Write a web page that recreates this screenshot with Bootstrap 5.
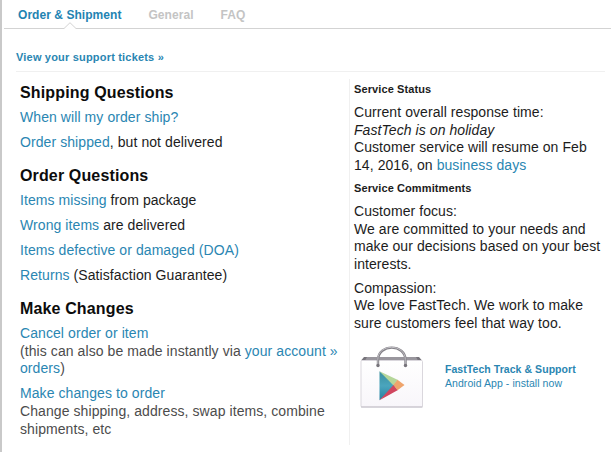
<!DOCTYPE html>
<html lang="en">
<head>
<meta charset="utf-8">
<title>Support</title>
<link href="https://cdn.jsdelivr.net/npm/bootstrap@5.3.0/dist/css/bootstrap.min.css" rel="stylesheet">
<style>
html,body{height:452px;overflow:hidden}
body{font-family:"Liberation Sans",Arial,sans-serif;font-size:14px;line-height:17.7px;letter-spacing:.05px;color:#1c1c1c;background:#fff}
.panel{height:452px;border-left:2px solid #c9c9c9}
a{color:#2a86b2;text-decoration:none}
.tabs{height:29px;border-bottom:1px solid #d3d3d3;margin-left:2px;padding:6px 0 0 14px;font-size:12px;line-height:18px;font-weight:bold;gap:27px}
.tabs a{color:#c4c4c4}
.tabs a.current{color:#2383b2}
.notch{left:46px;top:16px;width:12px;height:7px}
.tickets{height:43px;margin:0 6px 0 14px;padding-top:19px;border-bottom:1px solid #f0f0f0;font-size:11px;line-height:18px;letter-spacing:.19px}
.questions{width:347px;padding:11px 0 0 18px}
.questions h2{font-size:16px;line-height:19px;font-weight:bold;color:#0c0c0c;margin:0 0 7.4px;letter-spacing:.14px}
.questions p{margin:0 0 7px;letter-spacing:.08px}
.questions p.group-end{margin-bottom:14.3px}
.muted{color:#4c4c4c}
.status{width:256px;height:366px;margin-top:7px;padding:2px 0 0 4px;border-left:1px solid #f0f0f0}
.status h3{font-size:11px;line-height:16px;font-weight:bold;margin:0 0 7px;letter-spacing:.1px}
.status p{margin:0 0 6px;letter-spacing:.07px}
.status p.overall{margin-bottom:5px}
.app{font-size:10.5px;line-height:14px;letter-spacing:.06px;gap:21px;padding:5px 0 0 6px}
</style>
<script src="https://cdn.jsdelivr.net/npm/bootstrap@5.3.0/dist/js/bootstrap.bundle.min.js"></script>
</head>
<body>
<main class="panel">
<nav class="tabs d-flex">
<a class="current position-relative" href="#">Order &amp; Shipment<svg class="notch position-absolute" viewBox="0 0 12 7"><path d="M0 6.5 6 .7 12 6.5V7H0z" fill="#fff"/><path d="M0 6.5 6 .7 12 6.5" fill="none" stroke="#d3d3d3"/></svg></a>
<a href="#">General</a>
<a href="#">FAQ</a>
</nav>
<div class="tickets"><a class="fw-bold" href="#">View your support tickets »</a></div>
<div class="d-flex">
<section class="questions flex-shrink-0">
<h2>Shipping Questions</h2>
<p><a href="#">When will my order ship?</a></p>
<p class="group-end"><a href="#">Order shipped</a>, but not delivered</p>
<h2>Order Questions</h2>
<p><a href="#">Items missing</a> from package</p>
<p><a href="#">Wrong items</a> are delivered</p>
<p><a href="#">Items defective or damaged (DOA)</a></p>
<p class="group-end"><a href="#">Returns</a> (Satisfaction Guarantee)</p>
<h2>Make Changes</h2>
<p class="muted"><a href="#">Cancel order or item</a><br>(this can also be made instantly via <a href="#">your account »<br>orders</a>)</p>
<p class="muted"><a href="#">Make changes to order</a><br>Change shipping, address, swap items, combine<br>shipments, etc</p>
</section>
<aside class="status flex-shrink-0">
<h3>Service Status</h3>
<p class="overall">Current overall response time:<br><em>FastTech is on holiday</em><br>Customer service will resume on Feb<br>14, 2016, on <a href="#">business days</a></p>
<h3>Service Commitments</h3>
<p>Customer focus:<br>We are committed to your needs and<br>make our decisions based on your best<br>interests.</p>
<p>Compassion:<br>We love FastTech. We work to make<br>sure customers feel that way too.</p>
<a class="app d-flex align-items-center" href="#">
<svg width="64" height="64" viewBox="0 0 64 64">
<defs>
<linearGradient id="bag" x1="0" y1="0" x2="0" y2="1"><stop offset="0" stop-color="#fff"/><stop offset="1" stop-color="#f8f6fa"/></linearGradient>
<linearGradient id="teal" x1="0" y1="0" x2="0" y2="1"><stop offset="0" stop-color="#3b8e9d"/><stop offset=".5" stop-color="#4aa5bd"/><stop offset="1" stop-color="#287f9f"/></linearGradient>
</defs>
<path d="M4 13H59L62 16.500H1z" fill="#77747b"/>
<path d="M7 13H56L58 16.500H5z" fill="#99969d"/>
<rect x="1" y="16.500" width="61.500" height="46.500" rx="1" fill="url(#bag)" stroke="#dad7dd"/>
<path d="M1 63H62.500" stroke="#c2bfc7"/>
<path d="M18 21V16C18 -.500 45.500 -.500 45.500 16V21" fill="none" stroke="#858389" stroke-width="2.400"/>
<path d="M17.800 20V15.500C17.800 -.700 45.300 -.700 45.300 15.500V20" fill="none" stroke="#c5c3c8" stroke-width=".9"/>
<circle cx="18" cy="21.500" r="1.700" fill="#77747b"/><circle cx="45.500" cy="21.500" r="1.700" fill="#77747b"/>
<path d="M19.500 27.300V56.300L36 41.500z" fill="url(#teal)"/>
<path d="M19.500 27.300 38 36 33.500 41.500z" fill="#b5d69a"/>
<path d="M19.500 56.300 38 46 33.500 41z" fill="#d0465f"/>
<path d="M37.500 35.800 44.500 41 37.500 46.200 33.500 41z" fill="#efa46c"/>
</svg>
<span><b>FastTech Track &amp; Support</b><br>Android App - install now</span>
</a>
</aside>
</div>
</main>
</body>
</html>
